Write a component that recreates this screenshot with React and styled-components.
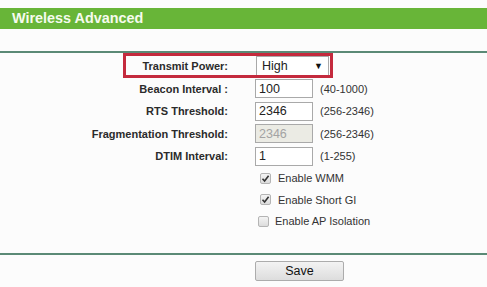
import React from 'react'
import styled, { createGlobalStyle } from 'styled-components'

const GlobalStyle = createGlobalStyle`
  html, body {
    margin: 0;
    padding: 0;
    background: #fcfcfc;
    font-family: "Liberation Sans", Arial, sans-serif;
    color: #333;
  }
`

const fields = [
  { label: 'Beacon Interval :', value: '100', hint: '(40-1000)' },
  { label: 'RTS Threshold:', value: '2346', hint: '(256-2346)' },
  { label: 'Fragmentation Threshold:', value: '2346', hint: '(256-2346)', disabled: true },
  { label: 'DTIM Interval:', value: '1', hint: '(1-255)' },
]

const options = [
  { label: 'Enable WMM', checked: true },
  { label: 'Enable Short GI', checked: true },
  { label: 'Enable AP Isolation', checked: false, shift: true },
]

const App = () => {
  return (
    <Page>
      <GlobalStyle />
      <Header>Wireless Advanced</Header>
      <Divider />
      <Form>
        <Row highlight>
          <Label>Transmit Power:</Label>
          <Select>
            <span>High</span>
            <Arrow>▼</Arrow>
          </Select>
        </Row>
        {fields.map(f => (
          <Row key={f.label}>
            <Label>{f.label}</Label>
            <Control>
              <Input defaultValue={f.value} disabled={f.disabled} />
              <Hint>{f.hint}</Hint>
            </Control>
          </Row>
        ))}
        {options.map(o => (
          <CheckRow key={o.label}>
            <span />
            <CheckLabel shift={o.shift}>
              <Box>
                {o.checked && (
                  <svg width="9" height="9" viewBox="0 0 9 9">
                    <path d="M1.5 4.8 L3.6 7 L7.6 1.8" fill="none" stroke="#333" strokeWidth="1.6" />
                  </svg>
                )}
              </Box>
              {o.label}
            </CheckLabel>
          </CheckRow>
        ))}
      </Form>
      <Divider bottom />
      <Footer>
        <SaveButton>Save</SaveButton>
      </Footer>
    </Page>
  )
}

export default App

const Page = styled.div`
  padding-top: 8px;
  width: 487px;
`

const Header = styled.div`
  height: 21px;
  line-height: 21px;
  background: #68b538;
  color: #f6fbee;
  font-weight: bold;
  font-size: 14.4px;
  padding-left: 12px;
`

const Divider = styled.div`
  margin-top: ${p => (p.bottom ? '21px' : '22px')};
  height: 2px;
  background: #5b8a76;
`

const Form = styled.div`
  margin-top: 2px;
  display: flex;
  flex-direction: column;
`

const Row = styled.div`
  position: relative;
  height: 22.5px;
  display: grid;
  grid-template-columns: 228px auto;
  column-gap: 27px;
  align-items: center;

  ${p => p.highlight && `
    &::before {
      content: '';
      position: absolute;
      left: 123px;
      top: -2px;
      width: 204px;
      height: 19px;
      border: 3px solid #c42a3d;
      pointer-events: none;
    }
  `}
`

const Label = styled.div`
  text-align: right;
  font-weight: bold;
  font-size: 11px;
  color: #2b2b2b;
`

const Select = styled.div`
  width: 69px;
  height: 18px;
  border: 1px solid #a9a9a9;
  background: #fff;
  display: flex;
  align-items: center;
  justify-content: space-between;
  padding: 0 5px;
  box-sizing: content-box;
  margin-left: 1px;
  font-size: 12.5px;
  color: #222;
  width: 61px;
`

const Arrow = styled.span`
  font-size: 9px;
  color: #111;
`

const Control = styled.div`
  display: flex;
  align-items: center;
  gap: 7px;
`

const Input = styled.input`
  width: 58px;
  height: 19px;
  box-sizing: border-box;
  border: 1px solid #a9a9a9;
  padding: 0 3px;
  margin: 0;
  font-family: "Liberation Sans", Arial, sans-serif;
  font-size: 12.5px;
  color: #222;
  background: #fff;
  outline: none;

  &:disabled {
    background: #ebebe4;
    color: #a3a3a3;
  }
`

const Hint = styled.span`
  font-size: 11px;
  color: #333;
`

const CheckRow = styled.div`
  height: 21.5px;
  display: grid;
  grid-template-columns: 228px auto;
  column-gap: 27px;
  align-items: center;
`

const CheckLabel = styled.label`
  display: flex;
  align-items: center;
  gap: ${p => (p.shift ? '6px' : '7px')};
  margin-left: ${p => (p.shift ? '3px' : '5px')};
  font-size: 11px;
  color: #333;
`

const Box = styled.span`
  width: 11px;
  height: 11px;
  box-sizing: border-box;
  border: 1px solid #b4b4b4;
  border-radius: 2px;
  background: linear-gradient(#f4f4f4, #dcdcdc);
  display: flex;
  align-items: center;
  justify-content: center;
`

const Footer = styled.div`
  padding-top: 6px;
  padding-left: 255px;
`

const SaveButton = styled.button`
  width: 89px;
  height: 20px;
  border: 1px solid #acacac;
  border-radius: 2px;
  background: linear-gradient(#f3f3f3, #dddddd);
  font-family: "Liberation Sans", Arial, sans-serif;
  font-size: 12.5px;
  color: #111;
  padding: 0;
`
